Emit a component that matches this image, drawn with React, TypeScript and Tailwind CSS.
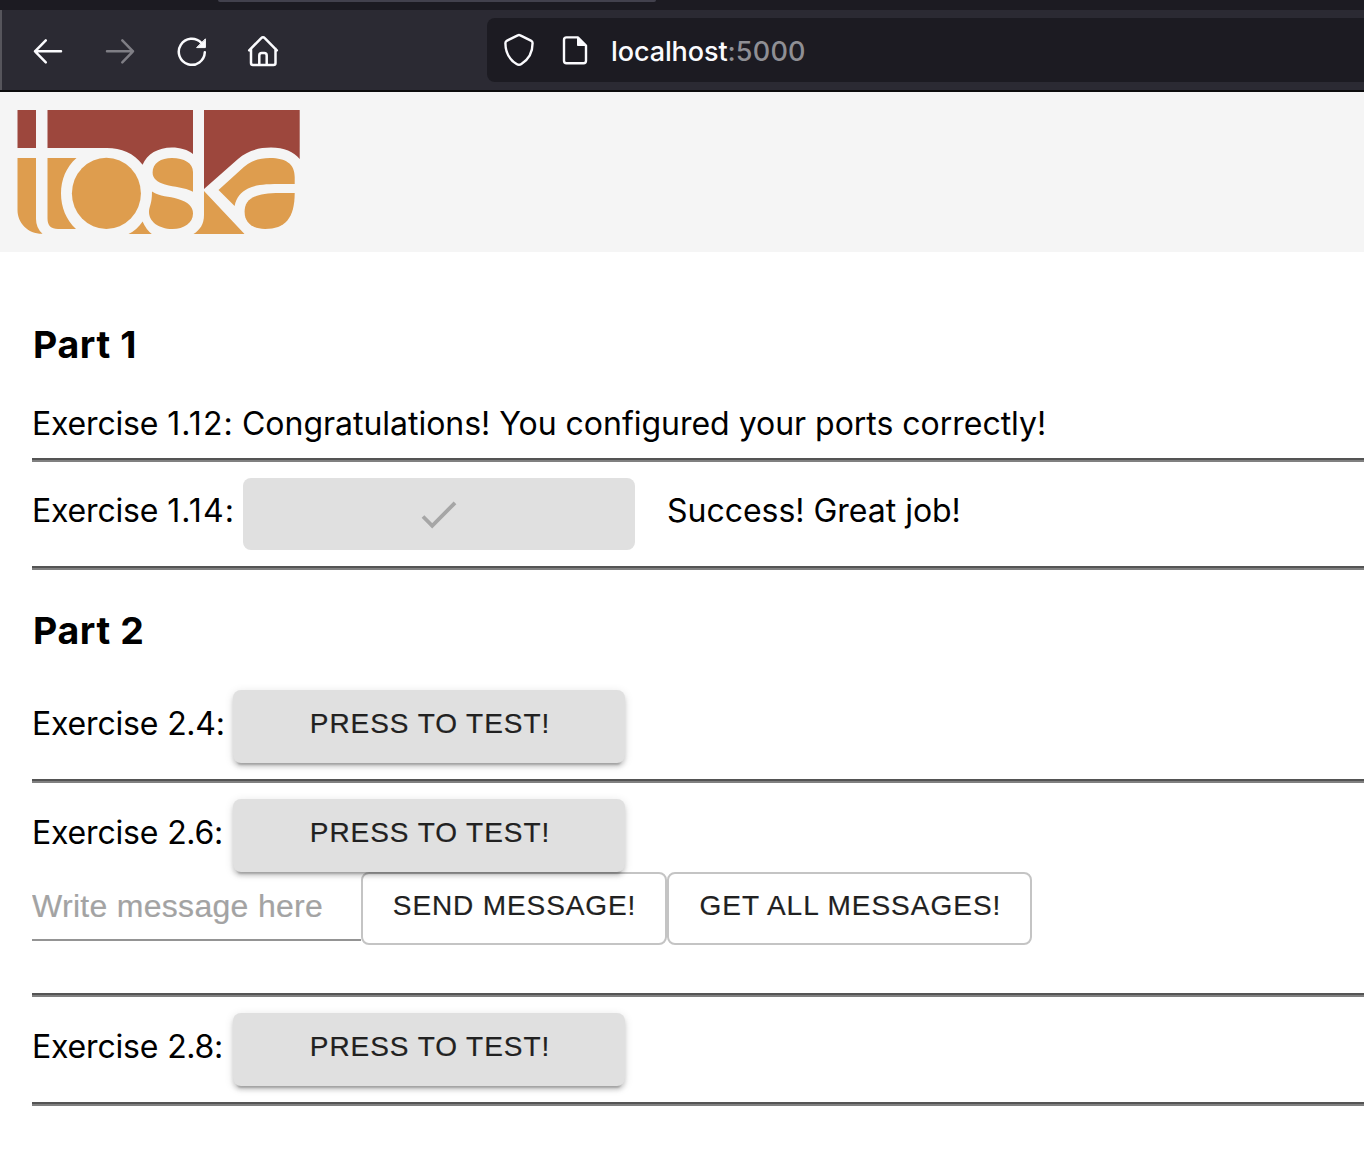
import type { ReactNode } from "react";

const SHADOW =
  "shadow-[0_6px_2px_-4px_rgba(0,0,0,0.2),0_4px_4px_0_rgba(0,0,0,0.14),0_2px_10px_0_rgba(0,0,0,0.12)]";

function BrowserBar() {
  return (
    <div className="h-[92px] border-b-2 border-[#0c0c0d] bg-[#2b2a33]">
      <div className="flex h-[10px] bg-[#1c1b22] pl-[218px]">
        <div className="h-[2px] w-[438px] rounded-b-[3px] bg-[#42414d]" />
      </div>
      <div className="flex h-20 border-l-2 border-[#56555c]">
        <div className="flex w-[485px] items-center pt-[2px]">
          <svg className="ml-[30px] h-8 w-8" viewBox="32 35 32 32" fill="none" stroke="#fbfbfe" strokeWidth="2.5" strokeLinecap="round" strokeLinejoin="round">
            <path d="M61 51.3H35M45.8 40.3 35 51.3l10.8 11" />
          </svg>
          <svg className="ml-10 h-8 w-8" viewBox="104 35 32 32" fill="none" stroke="#7f7e85" strokeWidth="2.5" strokeLinecap="round" strokeLinejoin="round">
            <path d="M107 51.3H133M122.3 40.3 133 51.3l-10.7 11" />
          </svg>
          <svg className="ml-10 h-8 w-8" viewBox="176 35 32 32" fill="none" stroke="#fbfbfe" strokeWidth="2.5" strokeLinecap="round">
            <path d="M204.800 52.300A13 13 0 1 1 201.300 42.900" />
            <path d="M205.400 39.200v8.400h-8.400z" fill="#fbfbfe" stroke="#fbfbfe" strokeWidth="1" strokeLinejoin="round" />
          </svg>
          <svg className="ml-[39px] h-8 w-8" viewBox="247 35 32 32" fill="none" stroke="#fbfbfe" strokeWidth="2.5" strokeLinecap="round" strokeLinejoin="round">
            <path d="M249.200 50.300 261 38.300q2-2 4 0l11.800 12M251 48.800V63q0 2 2 2h20.500q2 0 2-2V48.800" />
            <path d="M259.300 64.500V55.500q0-2.500 2.500-2.500h2.400q2.500 0 2.500 2.500v9" />
          </svg>
        </div>
        <div className="my-2 flex flex-1 items-center rounded-l-lg bg-[#1c1b22]">
          <svg className="ml-4 h-[34px] w-8" viewBox="503 33 32 34" fill="none" stroke="#fbfbfe" strokeWidth="2.400" strokeLinejoin="round">
            <path d="M517.700 35.400q1.300-.7 2.600 0l10.600 5.200q1.700.8 1.700 2.500c0 9-4 16.500-11.200 20.900q-2.400 1.600-4.800 0c-7.200-4.400-11.200-11.900-11.200-20.900q0-1.700 1.700-2.500z" />
          </svg>
          <svg className="ml-6 h-8 w-8" viewBox="559 34 32 32" fill="none" stroke="#fbfbfe" strokeWidth="2.400" strokeLinejoin="round">
            <path d="M566.500 37.400h11.300l8.200 8.200v15.200q0 2.500-2.500 2.500h-17q-2.500 0-2.500-2.500V39.900q0-2.500 2.500-2.500z" />
            <path d="M577.500 37.400 586 45.500h-8.500z" fill="#fbfbfe" stroke="#fbfbfe" strokeWidth="1" />
          </svg>
          <span className="ml-5 whitespace-nowrap pt-1 text-[27px] font-medium leading-8 tracking-[-0.100px] text-[#fbfbfe]">
            localhost<span className="tracking-[0.200px] text-[#8f8f94]">:5000</span>
          </span>
        </div>
      </div>
    </div>
  );
}

function Logo() {
  return (
    <svg className="h-[125px] w-[283px]" viewBox="17 110 283 125" role="img" aria-label="toska">
      <g fill="#9d473d">
        <path d="M17.500 110H36v38H17.500z" />
        <path d="M47.500 110H193v44C188 149.800 180 147.500 172 147.500C158 147.500 147 154 142.600 164.800C134 153 121 148 107 148H47.500z" />
        <path d="M204 110h95.700v49C294 152 284 147.600 271 147.600C258 147.600 247 151 238 159L204 189z" />
      </g>
      <g fill="#de9d4e">
        <path d="M17.500 158H36v61Q36 228 42.500 233.800C28 234 17.500 223 17.500 210z" />
        <path d="M47.500 158H76.500C66 167 61 180 61 193.500C61 207 66 220 76 229H58Q47.500 229 47.500 218.500z" />
        <ellipse cx="106.400" cy="193.400" rx="34.500" ry="35.600" />
        <path d="M128.500 234Q137 230 142.600 221.500Q146 229.500 151.800 234z" />
        <path d="M172 158C184 158 193 163 193 172v19.700C184 187 175 187.500 165 184.500C157 182 152.600 178.500 152.600 172.500C152.600 163 161 158 172 158z" />
        <path d="M152 191.500C160 197 169 196 178 199C188 202 193 206.500 193 213.500C193 223 184 229 172.500 229C158 229 149 221 149 212C149 206 152 205 152 191.500z" />
        <path d="M204 191l40.500 43h-51C200 230 204 224 204 215z" />
        <path d="M218.500 190 240 170.500C249 161.500 258 158 270 158C286 158 294.700 164 294.700 177v7C270 184 258 183.500 248 188.500C241 192 236.500 197 234.600 206z" />
        <path d="M294.700 193C294.700 218 285 229 265 229C252 229 244.600 222 244.600 212C244.600 199 254 193 280 193z" />
      </g>
    </svg>
  );
}

function Rule() {
  return <div className="h-1 border-t-2 border-[#545454] bg-[#808080]" />;
}

function Message({ children }: { children: ReactNode }) {
  return <span className="whitespace-pre text-[32px] leading-10 tracking-[-0.020px]">{children}</span>;
}

function Label({ number, wide = false }: { number: string; wide?: boolean }) {
  return (
    <span className="whitespace-pre text-[32px] leading-10 tracking-[-0.180px]">
      {"Exercise "}
      <span className={wide ? "tracking-[1.100px]" : "tracking-[-0.300px]"}>{number}:</span>
    </span>
  );
}

function TestRow({ number }: { number: string }) {
  return (
    <div className="flex h-[73px]">
      <div className="w-[201px] pt-[14px]">
        <Label number={number} />
      </div>
      <button
        className={`relative flex h-[73px] w-[392px] justify-center rounded-lg bg-[#e0e0e0] pl-[2px] pt-[14px] font-['Liberation_Sans',sans-serif] text-[28px] leading-10 tracking-[0.940px] text-[#212121] [-webkit-text-stroke:0.2px_#212121] ${SHADOW}`}
      >
        PRESS TO TEST!
      </button>
    </div>
  );
}

export default function App() {
  return (
    <div className="h-[1154px] w-[1364px] overflow-hidden bg-white font-['Inter',sans-serif] text-black">
      <BrowserBar />
      <header className="h-40 bg-[#f5f5f5] pl-[17px] pt-[18px]">
        <Logo />
      </header>
      <main className="pl-8 pt-[68px]">
        <h3 className="h-[84px] pl-px text-[37.500px] font-bold leading-[50px] tracking-[0.600px]">Part 1</h3>
        <div className="flex h-[54px]">
          <div className="w-[210px]">
            <Label number="1.12" wide />
          </div>
          <Message>Congratulations! You configured your ports correctly!</Message>
        </div>
        <Rule />
        <div className="flex py-4">
          <div className="w-[211px] pt-[13px]">
            <Label number="1.14" wide />
          </div>
          <button className="flex h-[72px] w-[392px] items-center justify-center rounded-lg bg-[#e0e0e0] pt-px" aria-label="Passed">
            <svg className="h-[30px] w-9" viewBox="0 0 36 30" fill="none" stroke="#a6a6a6" strokeWidth="3.800">
              <path d="M2 16.500 11.200 25.800 34 2.800" />
            </svg>
          </button>
          <div className="ml-8 pt-[13px]">
            <Message>Success! Great job!</Message>
          </div>
        </div>
        <Rule />
        <h3 className="h-[120px] pl-px pt-9 text-[37.500px] font-bold leading-[50px] tracking-[0.600px]">Part 2</h3>
        <div className="pb-4">
          <TestRow number="2.4" />
        </div>
        <Rule />
        <div className="h-[210px] pt-4">
          <TestRow number="2.6" />
          <div className="flex font-['Liberation_Sans',sans-serif] text-[28px] text-[#212121]">
            <input
              className="h-[69px] w-[329px] border-b-2 border-[#949494] bg-transparent pt-[2px] text-[32px] tracking-[0.3px] outline-none placeholder:text-[#a3a3a3] placeholder:[-webkit-text-stroke:0.2px_#a3a3a3]"
              placeholder="Write message here"
            />
            <button className="h-[73px] w-[306px] whitespace-nowrap rounded-lg border-2 border-[#c4c4c4] pb-[5px] pl-px tracking-[0.880px] [-webkit-text-stroke:0.2px_#212121]">
              SEND MESSAGE!
            </button>
            <button className="h-[73px] w-[365px] whitespace-nowrap rounded-lg border-2 border-[#c4c4c4] pb-[5px] pl-[2px] tracking-[1px] [-webkit-text-stroke:0.2px_#212121]">
              GET ALL MESSAGES!
            </button>
          </div>
        </div>
        <Rule />
        <div className="py-4">
          <TestRow number="2.8" />
        </div>
        <Rule />
      </main>
    </div>
  );
}
